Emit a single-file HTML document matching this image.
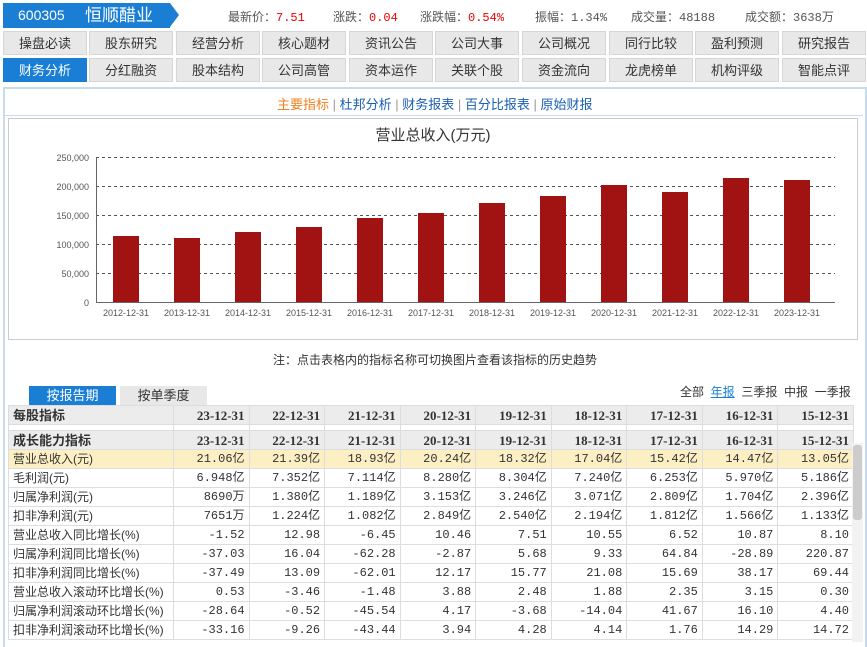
<!DOCTYPE html>
<html><head><meta charset="utf-8"><style>
*{margin:0;padding:0;box-sizing:border-box}
body{width:867px;height:642px;overflow:hidden;background:#fff;font-family:"Liberation Sans","Noto Sans CJK SC",sans-serif;font-size:12px;color:#333;position:relative}
.a{position:absolute}
.hd{left:3px;top:3px;width:167px;height:25px;background:#1a7fd4;color:#fff;}
.nav div{position:absolute;width:84px;height:24px;background:#e8e8e8;border:1px solid #d6d6d6;text-align:center;line-height:23px;font-size:13px;color:#333}
.nav div.on{background:#1a7fd4;color:#fff;border-color:#1a7fd4}
table{border-collapse:collapse;position:absolute;left:8px;font-size:12px}
td{border:1px solid #ddd;height:19px;line-height:17px;padding:0 4px;text-align:right;font-family:"Liberation Mono","Noto Sans CJK SC",monospace;font-size:12px;white-space:nowrap}
td:first-child{text-align:left;font-family:"Liberation Sans","Noto Sans CJK SC",sans-serif;width:165px}
tr.h td{background:#ececec;font-weight:bold;font-family:"Liberation Serif","Noto Serif CJK SC",serif;font-size:13px;color:#333}
tr.h td:first-child{font-family:"Liberation Sans","Noto Sans CJK SC",sans-serif}
tr.y td{background:#fdefc4}
tr.sp td{height:6px;line-height:0;font-size:0;padding:0}
</style></head><body>
<div class="a hd"><span class="a" style="left:15px;top:4px;font-size:14px;line-height:17px">600305</span><span class="a" style="left:82px;top:2px;font-size:17px;line-height:21px">恒顺醋业</span></div>
<div class="a" style="left:170px;top:3px;width:0;height:0;border-top:12.5px solid transparent;border-bottom:12.5px solid transparent;border-left:9px solid #1a7fd4"></div>
<div class="a" style="left:228px;top:8px;font-size:12px;color:#555;white-space:nowrap">最新价：<span style="color:#e00;font-family:'Liberation Mono',monospace">7.51</span></div>
<div class="a" style="left:333px;top:8px;color:#555">涨跌：<span style="color:#e00;font-family:'Liberation Mono',monospace">0.04</span></div>
<div class="a" style="left:420px;top:8px;color:#555">涨跌幅：<span style="color:#e00;font-family:'Liberation Mono',monospace">0.54%</span></div>
<div class="a" style="left:535px;top:8px;color:#555">振幅：<span style="font-family:'Liberation Mono',monospace">1.34%</span></div>
<div class="a" style="left:631px;top:8px;color:#555">成交量：<span style="font-family:'Liberation Mono',monospace">48188</span></div>
<div class="a" style="left:745px;top:8px;color:#555">成交额：<span style="font-family:'Liberation Mono',monospace">3638</span>万</div>
<div class="nav">
<div style="left:3px;top:31px">操盘必读</div><div style="left:89px;top:31px">股东研究</div><div style="left:176px;top:31px">经营分析</div><div style="left:262px;top:31px">核心题材</div><div style="left:349px;top:31px">资讯公告</div><div style="left:435px;top:31px">公司大事</div><div style="left:522px;top:31px">公司概况</div><div style="left:609px;top:31px">同行比较</div><div style="left:695px;top:31px">盈利预测</div><div style="left:782px;top:31px">研究报告</div>
<div class="on" style="left:3px;top:58px">财务分析</div><div style="left:89px;top:58px">分红融资</div><div style="left:176px;top:58px">股本结构</div><div style="left:262px;top:58px">公司高管</div><div style="left:349px;top:58px">资本运作</div><div style="left:435px;top:58px">关联个股</div><div style="left:522px;top:58px">资金流向</div><div style="left:609px;top:58px">龙虎榜单</div><div style="left:695px;top:58px">机构评级</div><div style="left:782px;top:58px">智能点评</div>
</div>
<div class="a" style="left:3px;top:87px;width:864px;height:560px;border:2px solid #c8dcec;border-bottom:none"></div>
<div class="a" style="left:277px;top:94px;font-size:13px;color:#1a5fb4;white-space:nowrap"><span style="color:#f08020">主要指标</span> <span style="color:#999">|</span> 杜邦分析 <span style="color:#999">|</span> 财务报表 <span style="color:#999">|</span> 百分比报表 <span style="color:#999">|</span> 原始财报</div>
<div class="a" style="left:5px;top:115px;width:858px;height:0;border-top:1px solid #c8dcec"></div>
<div class="a" style="left:8px;top:118px;width:850px;height:222px;border:1px solid #ccc"></div>
<svg class="a" style="left:0;top:0" width="867" height="340">
<text x="433" y="140" font-size="15" text-anchor="middle" fill="#333" font-family="Liberation Sans,Noto Sans CJK SC,sans-serif">营业总收入(万元)</text>
<g stroke="#555" stroke-dasharray="3,3" stroke-width="1">
<line x1="96" y1="157.5" x2="835" y2="157.5"/><line x1="96" y1="186.5" x2="835" y2="186.5"/><line x1="96" y1="215.5" x2="835" y2="215.5"/><line x1="96" y1="244.5" x2="835" y2="244.5"/><line x1="96" y1="273.5" x2="835" y2="273.5"/></g>
<line x1="96.5" y1="157" x2="96.5" y2="302" stroke="#666"/><line x1="96" y1="302.5" x2="835" y2="302.5" stroke="#666"/>
<g font-size="9" fill="#555" text-anchor="end" font-family="Liberation Sans,sans-serif">
<text x="89" y="161">250,000</text><text x="89" y="190">200,000</text><text x="89" y="219">150,000</text><text x="89" y="248">100,000</text><text x="89" y="277">50,000</text><text x="89" y="306">0</text></g>
<g fill="#a11212">
<rect x="113" y="236" width="26" height="66"/><rect x="174" y="238" width="26" height="64"/><rect x="235" y="232" width="26" height="70"/><rect x="296" y="227" width="26" height="75"/><rect x="357" y="218" width="26" height="84"/><rect x="418" y="213" width="26" height="89"/><rect x="479" y="203" width="26" height="99"/><rect x="540" y="196" width="26" height="106"/><rect x="601" y="185" width="26" height="117"/><rect x="662" y="192" width="26" height="110"/><rect x="723" y="178" width="26" height="124"/><rect x="784" y="180" width="26" height="122"/></g>
<g font-size="9" fill="#555" text-anchor="middle" font-family="Liberation Sans,sans-serif">
<text x="126" y="316">2012-12-31</text><text x="187" y="316">2013-12-31</text><text x="248" y="316">2014-12-31</text><text x="309" y="316">2015-12-31</text><text x="370" y="316">2016-12-31</text><text x="431" y="316">2017-12-31</text><text x="492" y="316">2018-12-31</text><text x="553" y="316">2019-12-31</text><text x="614" y="316">2020-12-31</text><text x="675" y="316">2021-12-31</text><text x="736" y="316">2022-12-31</text><text x="797" y="316">2023-12-31</text></g>
</svg>
<div class="a" style="left:273px;top:351px;font-size:12px;color:#333">注：点击表格内的指标名称可切换图片查看该指标的历史趋势</div>
<div class="a" style="left:29px;top:386px;width:87px;height:19px;background:#1a7fd4;color:#fff;text-align:center;line-height:19px;font-size:13px">按报告期</div>
<div class="a" style="left:120px;top:386px;width:87px;height:19px;background:#e8e8e8;color:#333;text-align:center;line-height:19px;font-size:13px">按单季度</div>
<div class="a" style="left:680px;top:383px;font-size:12px;color:#333;white-space:nowrap">全部 &nbsp;<span style="color:#1a7fd4;text-decoration:underline">年报</span> &nbsp;三季报 &nbsp;中报 &nbsp;一季报</div>
<table style="top:405px;width:846px">
<tr class="h"><td>每股指标</td><td>23-12-31</td><td>22-12-31</td><td>21-12-31</td><td>20-12-31</td><td>19-12-31</td><td>18-12-31</td><td>17-12-31</td><td>16-12-31</td><td>15-12-31</td></tr>
<tr class="sp"><td></td><td></td><td></td><td></td><td></td><td></td><td></td><td></td><td></td><td></td></tr>
<tr class="h"><td>成长能力指标</td><td>23-12-31</td><td>22-12-31</td><td>21-12-31</td><td>20-12-31</td><td>19-12-31</td><td>18-12-31</td><td>17-12-31</td><td>16-12-31</td><td>15-12-31</td></tr>
<tr class="y"><td>营业总收入(元)</td><td>21.06亿</td><td>21.39亿</td><td>18.93亿</td><td>20.24亿</td><td>18.32亿</td><td>17.04亿</td><td>15.42亿</td><td>14.47亿</td><td>13.05亿</td></tr>
<tr><td>毛利润(元)</td><td>6.948亿</td><td>7.352亿</td><td>7.114亿</td><td>8.280亿</td><td>8.304亿</td><td>7.240亿</td><td>6.253亿</td><td>5.970亿</td><td>5.186亿</td></tr>
<tr><td>归属净利润(元)</td><td>8690万</td><td>1.380亿</td><td>1.189亿</td><td>3.153亿</td><td>3.246亿</td><td>3.071亿</td><td>2.809亿</td><td>1.704亿</td><td>2.396亿</td></tr>
<tr><td>扣非净利润(元)</td><td>7651万</td><td>1.224亿</td><td>1.082亿</td><td>2.849亿</td><td>2.540亿</td><td>2.194亿</td><td>1.812亿</td><td>1.566亿</td><td>1.133亿</td></tr>
<tr><td>营业总收入同比增长(%)</td><td>-1.52</td><td>12.98</td><td>-6.45</td><td>10.46</td><td>7.51</td><td>10.55</td><td>6.52</td><td>10.87</td><td>8.10</td></tr>
<tr><td>归属净利润同比增长(%)</td><td>-37.03</td><td>16.04</td><td>-62.28</td><td>-2.87</td><td>5.68</td><td>9.33</td><td>64.84</td><td>-28.89</td><td>220.87</td></tr>
<tr><td>扣非净利润同比增长(%)</td><td>-37.49</td><td>13.09</td><td>-62.01</td><td>12.17</td><td>15.77</td><td>21.08</td><td>15.69</td><td>38.17</td><td>69.44</td></tr>
<tr><td>营业总收入滚动环比增长(%)</td><td>0.53</td><td>-3.46</td><td>-1.48</td><td>3.88</td><td>2.48</td><td>1.88</td><td>2.35</td><td>3.15</td><td>0.30</td></tr>
<tr><td>归属净利润滚动环比增长(%)</td><td>-28.64</td><td>-0.52</td><td>-45.54</td><td>4.17</td><td>-3.68</td><td>-14.04</td><td>41.67</td><td>16.10</td><td>4.40</td></tr>
<tr><td>扣非净利润滚动环比增长(%)</td><td>-33.16</td><td>-9.26</td><td>-43.44</td><td>3.94</td><td>4.28</td><td>4.14</td><td>1.76</td><td>14.29</td><td>14.72</td></tr>
</table>
<div class="a" style="left:852px;top:443px;width:11px;height:199px;background:#f2f2f2"></div>
<div class="a" style="left:853px;top:445px;width:9px;height:75px;background:#ccc;border-radius:3px"></div>
</body></html>
